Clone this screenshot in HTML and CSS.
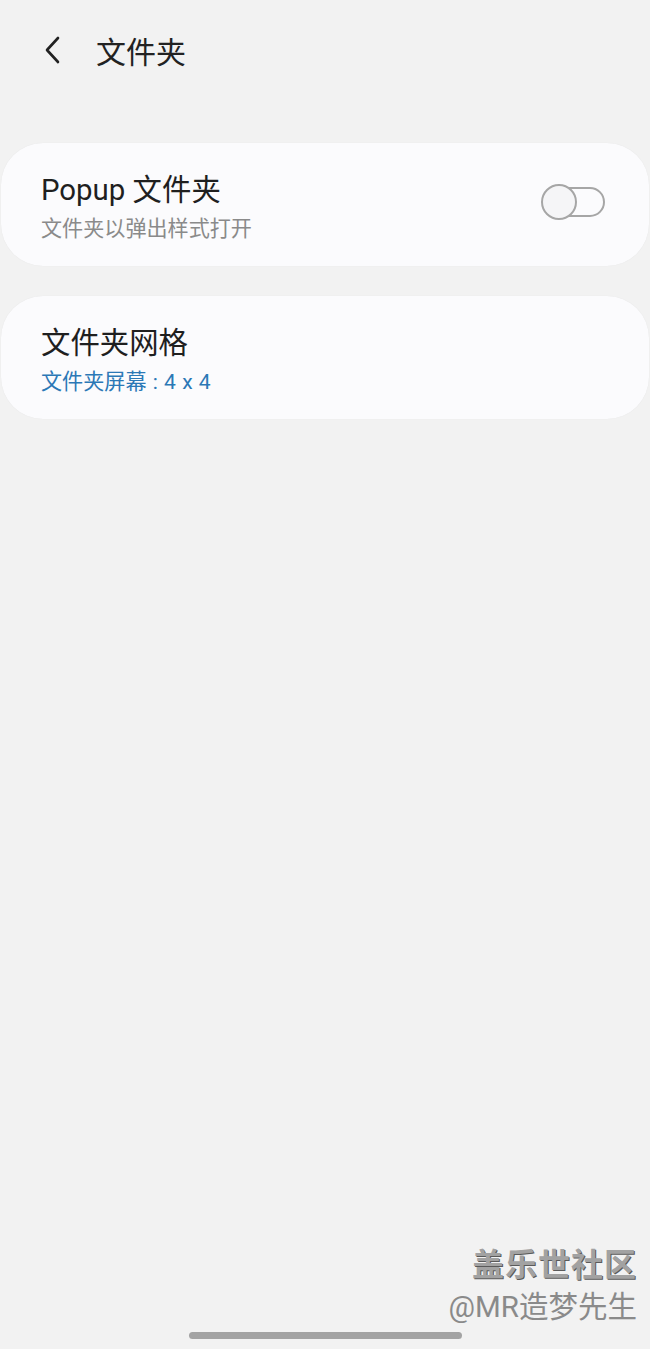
FILE: index.html
```html
<!DOCTYPE html>
<html lang="zh-CN">
<head>
    <meta charset="UTF-8">
    <meta name="viewport" content="width=device-width, initial-scale=1.0">
    <title>文件夹</title>
    <link rel="stylesheet" href="styles.css">
</head>
<body>
    <div class="screen">
        <!-- Top bar -->
        <div class="topbar">
            <span class="back">
                <svg width="22" height="30" viewBox="0 0 22 30">
                    <path d="M16 3 L5 15 L16 27" fill="none" stroke="#222" stroke-width="2.6" stroke-linecap="round" stroke-linejoin="round"/>
                </svg>
            </span>
            <h1 class="title">文件夹</h1>
        </div>

        <!-- Settings -->
        <div class="card">
            <div class="card-text">
                <div class="card-title">Popup 文件夹</div>
                <div class="card-sub">文件夹以弹出样式打开</div>
            </div>
            <div class="toggle">
                <span class="knob"></span>
            </div>
        </div>

        <div class="card">
            <div class="card-text">
                <div class="card-title">文件夹网格</div>
                <div class="card-sub blue">文件夹屏幕 : 4 x 4</div>
            </div>
        </div>

        <div class="spacer"></div>

        <div class="watermark">
            <div class="wm-big">盖乐世社区</div>
            <div class="wm-small">@MR造梦先生</div>
        </div>
        <div class="homebar"></div>
    </div>
</body>
</html>
```

FILE: styles.css
```css
body {
    margin: 0;
    background-color: #f2f2f2;
    font-family: "Roboto", "Noto Sans CJK SC", sans-serif;
    color: #1f1f1f;
}
.screen {
    height: 1349px;
    display: flex;
    flex-direction: column;
    overflow: hidden;
}
.topbar {
    display: flex;
    align-items: center;
    height: 100px;
    padding-left: 42px;
}
.back {
    display: flex;
    width: 54px;
}
.title {
    margin: 0;
    font-size: 30px;
    font-weight: 400;
    color: #222;
}
.card {
    margin: 43px 1px 0;
    height: 123px;
    background-color: #fbfbfd;
    border-radius: 42px;
    display: flex;
    align-items: center;
    justify-content: space-between;
    padding: 7px 44px 0 40px;
    box-sizing: border-box;
    box-shadow: 0 0 1px rgba(0, 0, 0, 0.08);
}
.card + .card {
    margin-top: 30px;
}
.card-title {
    font-size: 29.4px;
    line-height: 36px;
    color: #1f1f1f;
}
.card-sub {
    font-size: 21.1px;
    line-height: 30px;
    margin-top: 6px;
    color: #8a8a8a;
}
.card-sub.blue {
    color: #2b78b6;
    word-spacing: 1px;
}
.toggle {
    position: relative;
    width: 60px;
    height: 30px;
    border: 2px solid #a6a6a6;
    border-radius: 17px;
    box-sizing: border-box;
    margin-top: -12px;
}
.knob {
    position: absolute;
    left: -6px;
    top: -5px;
    width: 36px;
    height: 36px;
    border: 2px solid #a6a6a6;
    border-radius: 50%;
    box-sizing: border-box;
    background-color: #f5f5f7;
}
.spacer {
    flex: 1;
}
.watermark {
    text-align: right;
    padding-right: 13px;
    color: #8f8f8f;
}
.wm-big {
    font-size: 32px;
    font-weight: 700;
    line-height: 44px;
    letter-spacing: 1px;
    color: #a2a2a2;
    text-shadow: 1px 1px 0 #5a5a5a;
}
.wm-small {
    font-size: 29.5px;
    line-height: 40px;
    color: #8a8a8a;
}
.homebar {
    width: 273px;
    height: 7px;
    border-radius: 4px;
    background-color: #a3a3a3;
    margin: 5px auto 10px;
}
```
